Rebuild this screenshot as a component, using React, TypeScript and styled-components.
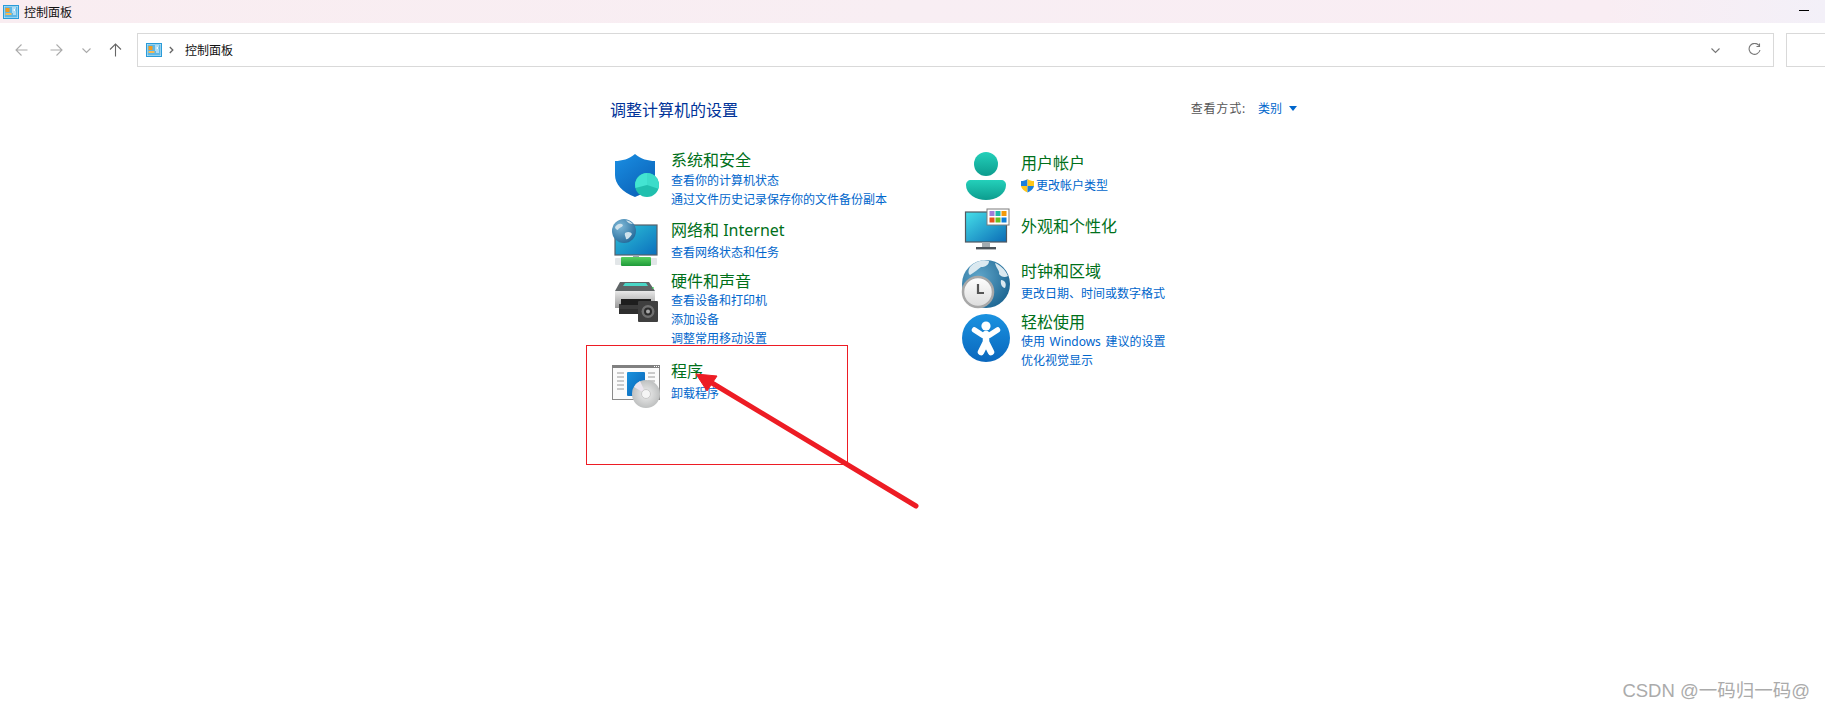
import React from "react";
import styled, { createGlobalStyle } from "styled-components";

const Global = createGlobalStyle`
  html, body { margin: 0; padding: 0; background: #fff; }
  body { font-family: "Noto Sans", "Noto Sans CJK SC", sans-serif; overflow: hidden; }
`;
const Page = styled.div`
  position: relative;
  width: 1825px;
  height: 710px;
  overflow: hidden;
  background: #fff;
`;
const TitleBar = styled.div`
  height: 23px;
  display: flex;
  align-items: center;
  padding: 0 16px 0 3px;
  background: linear-gradient(90deg, #f9edf1 0%, #f8eef3 50%, #f9edf3 88%, #f3f0f8 100%);
`;
const TitleText = styled.span`
  margin-left: 5px;
  font-size: 12px;
  color: #111;
  flex: 1;
`;
const Minimize = styled.span`
  width: 10px;
  height: 1px;
  background: #000;
  margin-bottom: 2px;
`;
const NavRow = styled.div`
  height: 34px;
  margin-top: 10px;
  display: flex;
  align-items: center;
`;
const NavIcons = styled.div`
  width: 137px;
  display: flex;
  align-items: center;
  flex: none;
`;
const NavBtn = styled.svg<{ $w: number; $ml: number }>`
  width: ${(p) => p.$w}px;
  height: 14px;
  margin-left: ${(p) => p.$ml}px;
  flex: none;
`;
const AddressBar = styled.div`
  width: 1637px;
  height: 34px;
  box-sizing: border-box;
  border: 1px solid #d9d9d9;
  display: flex;
  align-items: center;
  padding-left: 8px;
  flex: none;
`;
const Crumb = styled.span`
  font-size: 12px;
  color: #111;
  margin-left: 11px;
`;
const AddressEnd = styled.div`
  margin-left: auto;
  display: flex;
  align-items: center;
  gap: 28px;
  padding-right: 12px;
`;
const SearchBox = styled.div`
  width: 60px;
  height: 34px;
  box-sizing: border-box;
  border: 1px solid #d9d9d9;
  border-right: 0;
  margin-left: 12px;
  flex: none;
`;
const Main = styled.main`
  width: 687px;
  margin-left: 610px;
  padding-top: 32px;
`;
const HeaderRow = styled.div`
  display: flex;
  align-items: center;
  justify-content: space-between;
  height: 22px;
`;
const Heading = styled.h1`
  margin: 0;
  font-size: 16px;
  line-height: 22px;
  font-weight: 400;
  color: #003399;
`;
const ViewBy = styled.div`
  display: flex;
  align-items: center;
  font-size: 12px;
  color: #555;
  margin-top: -4px;
`;
const ViewLabel = styled.span`
  letter-spacing: 0.8px;
`;
const ViewLink = styled.span`
  color: #0066cc;
  margin-left: 12px;
`;
const Caret = styled.span`
  margin-left: 7px;
  width: 0;
  height: 0;
  border-left: 4.5px solid transparent;
  border-right: 4.5px solid transparent;
  border-top: 5px solid #0066cc;
`;
const Columns = styled.div`
  display: flex;
  margin-top: 28px;
`;
const Column = styled.div<{ $w: number; $top: number; $left: number }>`
  width: ${(p) => p.$w}px;
  padding-top: ${(p) => p.$top}px;
  padding-left: ${(p) => p.$left}px;
  box-sizing: border-box;
  flex: none;
`;
const Item = styled.section<{ $h: number }>`
  display: flex;
  height: ${(p) => p.$h}px;
`;
const ItemIcon = styled.svg<{ $top: number }>`
  width: 48px;
  height: 48px;
  margin-top: ${(p) => p.$top}px;
  margin-right: 11px;
  flex: none;
  overflow: visible;
`;
const ItemBody = styled.div`
  display: flex;
  flex-direction: column;
`;
const ItemTitle = styled.div<{ $gap: number }>`
  font-size: 16px;
  line-height: 22px;
  color: #00701a;
  margin-bottom: ${(p) => p.$gap}px;
  white-space: nowrap;
`;
const ItemLink = styled.div`
  display: flex;
  align-items: center;
  font-size: 12px;
  line-height: 19px;
  height: 19px;
  color: #0066cc;
  white-space: pre;
  word-spacing: 1.5px;
`;
const UacShield = styled.svg`
  width: 15px;
  height: 15px;
  margin-right: 1px;
  margin-left: -1px;
  flex: none;
`;
const Annotation = styled.div`
  position: absolute;
  left: 586px;
  top: 345px;
  width: 262px;
  height: 120px;
  box-sizing: border-box;
  border: 1px solid #ed1c24;
  pointer-events: none;
`;
const ArrowLayer = styled.svg`
  position: absolute;
  left: 0;
  top: 0;
  width: 1825px;
  height: 710px;
  pointer-events: none;
`;
const Watermark = styled.div`
  position: absolute;
  right: 15px;
  bottom: 8px;
  font-size: 18.5px;
  line-height: 22px;
  color: #ababab;
  font-family: "Liberation Sans", "Noto Sans CJK SC", sans-serif;
`;

const PanelIcon = () => (
  <svg width="16" height="14" viewBox="0 0 16 14" style={{ flex: "none" }}>
    <rect x="0.5" y="0.5" width="15" height="13" fill="#cfeaf8" stroke="#2a9bd8" />
    <rect x="1.5" y="1.5" width="13" height="11" fill="#5db7e6" />
    <path d="M2.5 3h4v4h-4z" fill="#f59a1d" />
    <path d="M2.5 8h6v2h-6z" fill="#f7b955" />
    <path d="M9 3h4M9 5h2M9 7h4M10 9h3" stroke="#fff" strokeWidth="1" />
    <circle cx="11.5" cy="5" r="1" fill="#fff" />
  </svg>
);

const line = { fill: "none", strokeWidth: 1.1 } as const;

const ShieldIcon = () => (
  <ItemIcon $top={2} viewBox="0 0 48 48">
    <defs>
      <linearGradient id="sh" x1="0" y1="0" x2="0.7" y2="1">
        <stop offset="0" stopColor="#1a8fe3" />
        <stop offset="1" stopColor="#0b62b8" />
      </linearGradient>
    </defs>
    <path d="M23 3 C17 8 10 10 3 10 L3 24 C3 33 10 41 23 46 C36 41 43 33 43 24 L43 10 C36 10 29 8 23 3Z" fill="url(#sh)" />
    <circle cx="35" cy="34" r="12" fill="#20bfae" />
    <path d="M35 34 L35 22 A12 12 0 0 0 23.4 37Z" fill="#43e4d2" />
    <path d="M35 34 L35 22 A12 12 0 0 1 46.4 37.7Z" fill="#3cdcca" />
  </ItemIcon>
);
const NetworkIcon = () => (
  <ItemIcon $top={0} viewBox="0 0 48 48">
    <defs>
      <linearGradient id="ns" x1="0" y1="0" x2="1" y2="1">
        <stop offset="0" stopColor="#2ec4d8" />
        <stop offset="1" stopColor="#0b6fbd" />
      </linearGradient>
      <radialGradient id="ng" cx="0.35" cy="0.3" r="0.8">
        <stop offset="0" stopColor="#7fb9d8" />
        <stop offset="1" stopColor="#1f6596" />
      </radialGradient>
      <linearGradient id="nb" x1="0" y1="0" x2="0" y2="1">
        <stop offset="0" stopColor="#57d05f" />
        <stop offset="1" stopColor="#1f9a3a" />
      </linearGradient>
    </defs>
    <rect x="3" y="6" width="42" height="30" fill="url(#ns)" stroke="#56606a" strokeWidth="1.2" />
    <rect x="21" y="36" width="6" height="4" fill="#9aa5ad" />
    <rect x="3" y="39" width="42" height="7" rx="1" fill="#e2e6e8" />
    <rect x="9" y="38" width="30" height="9" rx="1" fill="url(#nb)" />
    <circle cx="12" cy="12" r="12" fill="url(#ng)" />
    <path d="M3 8 C6 4 9 4 11 6 C10 9 7 8 6 11 C5 11 3 10 3 8Z M13 14 C16 12 19 13 20 15 C18 18 16 21 14 20 C14 18 12 16 13 14Z M14 1.5 C16 1 19 3 21 5 C18 5 16 4 14 1.5Z" fill="#cfe2ec" />
  </ItemIcon>
);
const PrinterIcon = () => (
  <ItemIcon $top={7} viewBox="0 0 48 48">
    <defs>
      <linearGradient id="pb" x1="0" y1="0" x2="0" y2="1">
        <stop offset="0" stopColor="#e8e8e8" />
        <stop offset="1" stopColor="#9a9a9a" />
      </linearGradient>
    </defs>
    <path d="M8 5 H37 L43 14 V26 H3 V14Z" fill="#5f6466" />
    <path d="M13 6 H34 L36 9 H11Z" fill="#49d6c6" />
    <rect x="3" y="14" width="40" height="17" fill="url(#pb)" />
    <rect x="7" y="27" width="34" height="5" fill="#3c3c3c" />
    <rect x="9" y="22" width="30" height="6" fill="#1e1e1e" />
    <rect x="7" y="32" width="30" height="5" fill="#2e2e2e" />
    <rect x="40" y="10" width="1.6" height="1.6" fill="#3ecb5a" />
    <rect x="26" y="24" width="20" height="21" rx="1" fill="#3f3f3f" />
    <circle cx="36" cy="34.5" r="6.5" fill="#707070" />
    <circle cx="36" cy="34.5" r="4" fill="#2b2b2b" />
    <circle cx="36" cy="34.5" r="2" fill="#a8a8a8" />
  </ItemIcon>
);
const ProgramIcon = () => (
  <ItemIcon $top={1} viewBox="0 0 48 48">
    <defs>
      <linearGradient id="pg" x1="0" y1="0" x2="1" y2="1">
        <stop offset="0" stopColor="#1992dd" />
        <stop offset="1" stopColor="#0a62b5" />
      </linearGradient>
      <radialGradient id="cd" cx="0.5" cy="0.5" r="0.6">
        <stop offset="0" stopColor="#efefef" />
        <stop offset="1" stopColor="#b5b7b7" />
      </radialGradient>
    </defs>
    <rect x="0.5" y="4.5" width="47" height="34" fill="#fbfbfb" stroke="#8a8a8a" />
    <rect x="0" y="4" width="48" height="3" fill="#808080" />
    <path d="M42 5.5h1M44 5.5h1M46 5.5h1" stroke="#fff" />
    <path d="M5 12h7M5 16h7M5 20h7M5 24h7M5 28h7M36 12h7M36 16h7M36 20h7" stroke="#9a9a9a" strokeWidth="1" />
    <rect x="15" y="11" width="18" height="24" rx="1" fill="url(#pg)" />
    <circle cx="34" cy="33" r="14" fill="url(#cd)" />
    <path d="M34 33 L22 26 A14 14 0 0 1 28 20Z" fill="#ece6ef" />
    <circle cx="34" cy="33" r="4.5" fill="#f5f5f5" stroke="#c9c9c9" />
  </ItemIcon>
);
const UserIcon = () => (
  <ItemIcon $top={0} viewBox="0 0 48 48">
    <defs>
      <linearGradient id="ut" x1="0" y1="0" x2="0" y2="1">
        <stop offset="0" stopColor="#24d0ba" />
        <stop offset="1" stopColor="#0c9c8e" />
      </linearGradient>
    </defs>
    <circle cx="24" cy="12" r="12" fill="url(#ut)" />
    <path d="M9 28 H39 C42 28 44 30 44 33 C44 42 34 48 24 48 C14 48 4 42 4 33 C4 30 6 28 9 28Z" fill="url(#ut)" />
  </ItemIcon>
);
const AppearanceIcon = () => (
  <ItemIcon $top={-8} viewBox="0 0 48 48">
    <defs>
      <linearGradient id="as" x1="0" y1="0" x2="1" y2="1">
        <stop offset="0" stopColor="#45dfe9" />
        <stop offset="1" stopColor="#0b6cb6" />
      </linearGradient>
    </defs>
    <rect x="3.5" y="5" width="41" height="30" fill="url(#as)" stroke="#50585f" strokeWidth="1.2" />
    <rect x="20" y="35" width="8" height="5" fill="#a3abb0" />
    <rect x="14" y="40" width="20" height="2.4" fill="#4a5259" />
    <rect x="25" y="2" width="22" height="16" fill="#fff" stroke="#7d7d7d" strokeWidth="1" />
    <rect x="27.5" y="4" width="5" height="5" fill="#a17cd8" />
    <rect x="33.5" y="4" width="5" height="5" fill="#22b8a8" />
    <rect x="39.5" y="4" width="5" height="5" fill="#f29a0c" />
    <rect x="27.5" y="10.5" width="5" height="5" fill="#e8521b" />
    <rect x="33.5" y="10.5" width="5" height="5" fill="#6abf1c" />
    <rect x="39.5" y="10.5" width="5" height="5" fill="#0c7fd8" />
  </ItemIcon>
);
const ClockIcon = () => (
  <ItemIcon $top={0} viewBox="0 0 48 48">
    <defs>
      <radialGradient id="cg" cx="0.35" cy="0.35" r="0.8">
        <stop offset="0" stopColor="#5fa5c9" />
        <stop offset="1" stopColor="#17608d" />
      </radialGradient>
      <linearGradient id="cf" x1="0" y1="0" x2="0" y2="1">
        <stop offset="0" stopColor="#ffffff" />
        <stop offset="1" stopColor="#dcdcdc" />
      </linearGradient>
    </defs>
    <circle cx="24" cy="24" r="24" fill="url(#cg)" />
    <path d="M8 7 C13 1 22 -1 27 1 C27 5 23 7 19 7 C16 9 13 12 8 15 C6 14 6 10 8 7Z M33 3 C38 5 43 9 46 16 C43 18 39 17 37 14 C38 11 34 8 33 3Z M39 20 C43 20 45 24 43 28 C41 28 38 25 39 20Z" fill="#dbe9f0" />
    <circle cx="16" cy="32" r="15" fill="url(#cf)" stroke="#a8a8a8" strokeWidth="2.5" />
    <path d="M16 24 V33 H22" fill="none" stroke="#555" strokeWidth="2.2" />
  </ItemIcon>
);
const AccessIcon = () => (
  <ItemIcon $top={3} viewBox="0 0 48 48">
    <defs>
      <linearGradient id="ac" x1="0" y1="0" x2="0" y2="1">
        <stop offset="0" stopColor="#1a92e0" />
        <stop offset="1" stopColor="#0a67bd" />
      </linearGradient>
    </defs>
    <circle cx="24" cy="24" r="24" fill="url(#ac)" />
    <circle cx="24" cy="12" r="4.6" fill="#fff" />
    <path d="M12.5 16 L21 21.5 H27 L35.5 16" fill="none" stroke="#fff" strokeWidth="5.5" strokeLinecap="round" strokeLinejoin="round" />
    <path d="M24 20 V29 M24 28 L19 38 M24 28 L29 38" fill="none" stroke="#fff" strokeWidth="6.5" strokeLinecap="round" strokeLinejoin="round" />
  </ItemIcon>
);

type Entry = { title: string; h: number; gap: number; icon: React.ReactNode; links: React.ReactNode[] };

const leftItems: Entry[] = [
  { title: "系统和安全", h: 70, gap: 0, icon: <ShieldIcon />, links: ["查看你的计算机状态", "通过文件历史记录保存你的文件备份副本"] },
  { title: "网络和 Internet", h: 51, gap: 2, icon: <NetworkIcon />, links: ["查看网络状态和任务"] },
  { title: "硬件和声音", h: 90, gap: -1, icon: <PrinterIcon />, links: ["查看设备和打印机", "添加设备", "调整常用移动设置"] },
  { title: "程序", h: 60, gap: 2, icon: <ProgramIcon />, links: ["卸载程序"] },
];
const rightItems: Entry[] = [
  {
    title: "用户帐户",
    h: 63,
    gap: 2,
    icon: <UserIcon />,
    links: [
      <>
        <UacShield viewBox="0 0 15 15">
          <path d="M7.5 1 C5.5 2.5 3.5 3 1 3 V8 H7.5Z" fill="#1a7fdc" />
          <path d="M7.5 1 C9.5 2.5 11.5 3 14 3 V8 H7.5Z" fill="#ffc61a" />
          <path d="M1 8 C1.5 11 4 13 7.5 14.5 V8Z" fill="#ffc61a" />
          <path d="M14 8 C13.5 11 11 13 7.5 14.5 V8Z" fill="#1a7fdc" />
        </UacShield>
        更改帐户类型
      </>,
    ],
  },
  { title: "外观和个性化", h: 45, gap: 0, icon: <AppearanceIcon />, links: [] },
  { title: "时钟和区域", h: 51, gap: 2, icon: <ClockIcon />, links: ["更改日期、时间或数字格式"] },
  { title: "轻松使用", h: 60, gap: -1, icon: <AccessIcon />, links: ["使用 Windows 建议的设置", "优化视觉显示"] },
];

const renderItems = (items: Entry[]) =>
  items.map((it) => (
    <Item key={it.title} $h={it.h}>
      {it.icon}
      <ItemBody>
        <ItemTitle $gap={it.gap}>{it.title}</ItemTitle>
        {it.links.map((l, i) => (
          <ItemLink key={i}>{l}</ItemLink>
        ))}
      </ItemBody>
    </Item>
  ));

export default function App() {
  return (
    <Page>
      <Global />
      <TitleBar>
        <PanelIcon />
        <TitleText>控制面板</TitleText>
        <Minimize />
      </TitleBar>
      <NavRow>
        <NavIcons>
          <NavBtn $w={13} $ml={15} viewBox="0 0 13 14">
            <path d="M12.5 7H1M6.5 1.5 1 7l5.5 5.5" stroke="#aaa" {...line} />
          </NavBtn>
          <NavBtn $w={13} $ml={22} viewBox="0 0 13 14">
            <path d="M.5 7H12M6.5 1.5 12 7l-5.5 5.5" stroke="#aaa" {...line} />
          </NavBtn>
          <NavBtn $w={9} $ml={19} viewBox="0 0 9 14">
            <path d="M.5 5.5 4.5 9.5 8.5 5.5" stroke="#aaa" {...line} />
          </NavBtn>
          <NavBtn $w={13} $ml={18} viewBox="0 0 13 14">
            <path d="M6.5 13.5V1M1 6.5 6.5 1 12 6.5" stroke="#666" {...line} />
          </NavBtn>
        </NavIcons>
        <AddressBar>
          <PanelIcon />
          <NavBtn $w={5} $ml={7} viewBox="0 0 5 14">
            <path d="M.8 4 3.8 7 .8 10" stroke="#666" fill="none" strokeWidth="1.3" />
          </NavBtn>
          <Crumb>控制面板</Crumb>
          <AddressEnd>
            <NavBtn $w={9} $ml={0} viewBox="0 0 9 14">
              <path d="M.5 5.5 4.5 9.5 8.5 5.5" stroke="#777" {...line} />
            </NavBtn>
            <NavBtn $w={13} $ml={0} viewBox="0 0 13 14">
              <path d="M11 2.5A5.5 5.5 0 1 0 12 7M11.5 .5v3h-3" stroke="#777" {...line} />
            </NavBtn>
          </AddressEnd>
        </AddressBar>
        <SearchBox />
      </NavRow>
      <Main>
        <HeaderRow>
          <Heading>调整计算机的设置</Heading>
          <ViewBy>
            <ViewLabel>查看方式:</ViewLabel>
            <ViewLink>类别</ViewLink>
            <Caret />
          </ViewBy>
        </HeaderRow>
        <Columns>
          <Column $w={350} $top={0} $left={2}>
            {renderItems(leftItems)}
          </Column>
          <Column $w={337} $top={3} $left={2}>
            {renderItems(rightItems)}
          </Column>
        </Columns>
      </Main>
      <Annotation />
      <ArrowLayer viewBox="0 0 1825 710">
        <path d="M916 506 L712 383" stroke="#ed1c24" strokeWidth="5" strokeLinecap="round" fill="none" />
        <path d="M696 374 L717 376 L707 391Z" fill="#ed1c24" stroke="#ed1c24" strokeWidth="1" strokeLinejoin="round" />
      </ArrowLayer>
      <Watermark>CSDN @一码归一码@</Watermark>
    </Page>
  );
}
